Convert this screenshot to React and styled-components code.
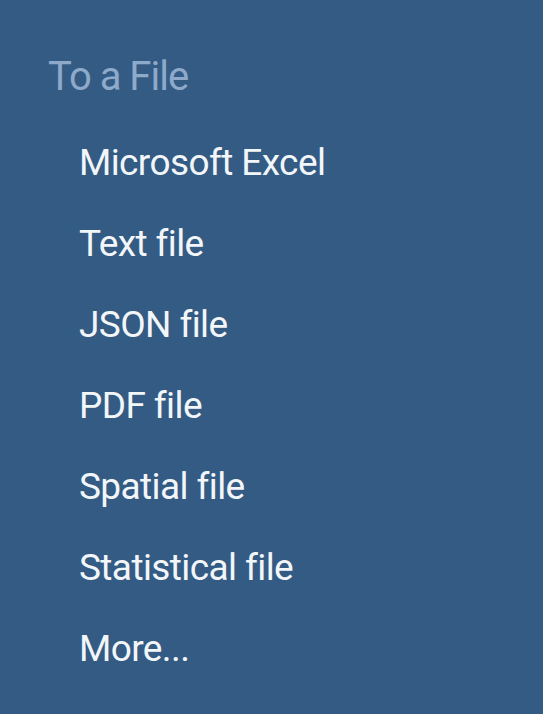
import React from "react";
import styled, { createGlobalStyle } from "styled-components";

const Global = createGlobalStyle`
  html, body { margin: 0; padding: 0; background: #345b84; }
  body { font-family: Roboto, "Liberation Sans", sans-serif; }
`;

const Panel = styled.div`
  width: 543px;
  height: 714px;
  background: #345b84;
  box-sizing: border-box;
  padding: 52px 0 0 48px;
  display: flex;
  flex-direction: column;
`;

const Title = styled.div`
  color: #8eaacb;
  font-size: 40px;
  line-height: 50px;
  letter-spacing: -1px;
  font-weight: 400;
`;

const List = styled.ul`
  list-style: none;
  margin: 20px 0 0 0;
  padding: 0 0 0 31px;
  display: flex;
  flex-direction: column;
`;

const Item = styled.li`
  color: #f3f6f9;
  font-size: 37px;
  letter-spacing: -0.6px;
  line-height: 81px;
  height: 81px;
`;

const items = [
  "Microsoft Excel",
  "Text file",
  "JSON file",
  "PDF file",
  "Spatial file",
  "Statistical file",
  "More...",
];

export default function App() {
  return (
    <>
      <Global />
      <Panel>
        <Title>To a File</Title>
        <List>
          {items.map((t) => (
            <Item key={t}>{t}</Item>
          ))}
        </List>
      </Panel>
    </>
  );
}
